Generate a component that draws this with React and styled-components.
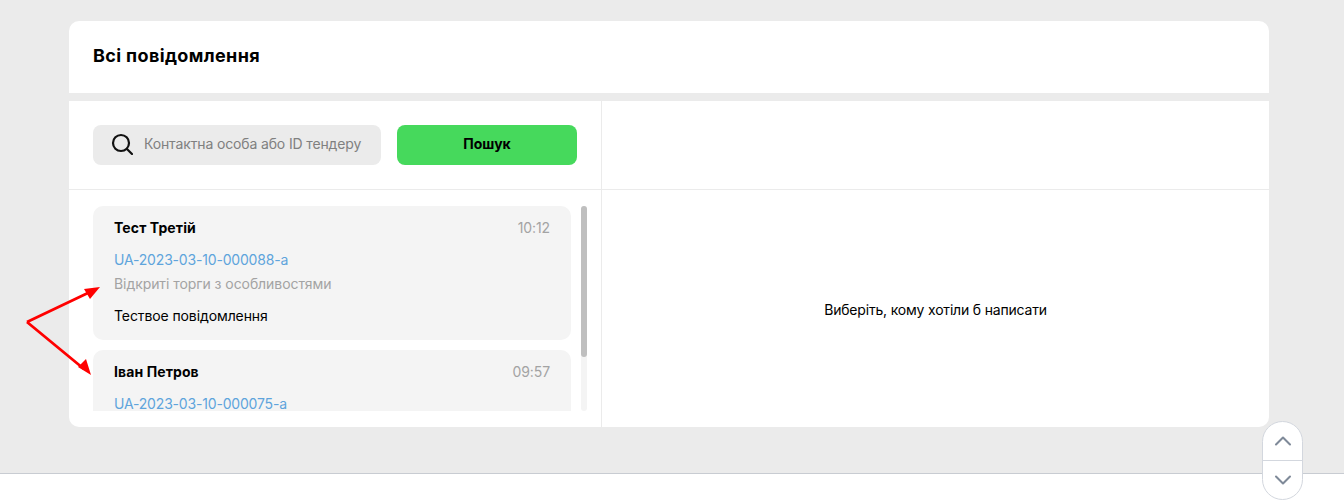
import React from "react";
import styled, { createGlobalStyle } from "styled-components";
import { ChevronUp, ChevronDown } from "lucide-react";

const GlobalStyle = createGlobalStyle`
  html, body {
    margin: 0;
    padding: 0;
    background: #fff;
    font-family: Inter, "Liberation Sans", sans-serif;
    color: #000;
  }
  * {
    box-sizing: border-box;
  }
`;

const Page = styled.div`
  position: relative;
  height: 500px;
  overflow: hidden;
`;

const Main = styled.main`
  height: 474px;
  padding: 21px 75px 0 69px;
  background: #ebebeb;
  border-bottom: 1px solid #c8ccd2;
`;

const Card = styled.section`
  display: flex;
  flex-direction: column;
  gap: 8px;
  height: 406px;
`;

const Header = styled.header`
  display: flex;
  align-items: center;
  height: 72px;
  padding: 0 24px 2px;
  background: #fff;
  border-radius: 10px 10px 0 0;
`;

const Title = styled.h1`
  margin: 0;
  font-size: 18px;
  font-weight: 700;
  line-height: 24px;
  letter-spacing: 0.37px;
`;

const Body = styled.div`
  flex: 1;
  display: flex;
  background: #fff;
  border-radius: 0 0 10px 10px;
  min-height: 0;
`;

const Sidebar = styled.div`
  display: flex;
  flex-direction: column;
  width: 533px;
  border-right: 1px solid #ebebeb;
`;

const SearchRow = styled.div`
  display: flex;
  gap: 16px;
  height: 89px;
  padding: 24px 24px 0;
  border-bottom: 1px solid #ebebeb;
`;

const SearchBox = styled.div`
  display: flex;
  align-items: center;
  gap: 11px;
  width: 288px;
  height: 40px;
  padding: 0 0 2px 18px;
  background: #ebebeb;
  border-radius: 8px;
`;

const SearchText = styled.span`
  margin-bottom: 2px;
  font-size: 14px;
  color: #808080;
  white-space: nowrap;
  letter-spacing: -0.14px;
`;

const SearchButton = styled.button`
  width: 180px;
  height: 40px;
  padding: 0 0 3px;
  border: 0;
  border-radius: 8px;
  background: #46d95c;
  font-family: inherit;
  font-size: 14px;
  font-weight: 700;
  color: #000;
`;

const ListWrap = styled.div`
  display: flex;
  gap: 10px;
  height: 205px;
  margin: 16px 14px 0 24px;
`;

const List = styled.div`
  flex: 1;
  display: flex;
  flex-direction: column;
  gap: 10px;
  overflow: hidden;
`;

const Dialog = styled.article`
  flex-shrink: 0;
  height: 134px;
  padding: 11px 21px 0;
  background: #f4f4f4;
  border-radius: 10px;
`;

const DialogTop = styled.div`
  display: flex;
  justify-content: space-between;
  align-items: center;
  height: 20px;
`;

const Name = styled.span`
  font-size: 14px;
  font-weight: 700;
  letter-spacing: 0.1px;
`;

const Time = styled.span`
  font-size: 14px;
  color: #a3a3a3;
  letter-spacing: -0.1px;
`;

const TenderId = styled.div`
  margin-top: 13px;
  font-size: 14px;
  line-height: 20px;
  color: #5ea4dc;
  letter-spacing: -0.18px;
`;

const Kind = styled.div`
  margin-top: 4px;
  font-size: 14px;
  line-height: 20px;
  color: #a3a3a3;
  letter-spacing: -0.07px;
`;

const Message = styled.div`
  margin-top: 12px;
  font-size: 14px;
  line-height: 20px;
  letter-spacing: -0.1px;
`;

const Track = styled.div`
  width: 6px;
  background: #f4f4f4;
  border-radius: 3px;
`;

const Thumb = styled.div`
  height: 151px;
  background: #bfbfbf;
  border-radius: 3px;
`;

const Chat = styled.div`
  flex: 1;
  display: flex;
  flex-direction: column;
`;

const ChatTop = styled.div`
  height: 89px;
  border-bottom: 1px solid #ebebeb;
`;

const ChatEmpty = styled.div`
  flex: 1;
  display: flex;
  align-items: center;
  justify-content: center;
  padding-top: 2px;
  font-size: 14px;
  letter-spacing: -0.19px;
`;

const ScrollControl = styled.div`
  position: absolute;
  left: 1262px;
  top: 421px;
  display: flex;
  flex-direction: column;
  width: 41px;
  height: 79px;
  background: #fff;
  border: 1.5px solid #d3d7de;
  border-radius: 21px;
`;

const ScrollButton = styled.button`
  flex: 1;
  display: flex;
  align-items: center;
  justify-content: center;
  padding: 0;
  background: none;
  border: 0;
  color: #7f8a99;

  & + & {
    border-top: 1.5px solid #d3d7de;
  }
`;

const Arrows = styled.svg`
  position: absolute;
  left: 0;
  top: 0;
  pointer-events: none;
`;

export default function App() {
  return (
    <Page>
      <GlobalStyle />
      <Main>
        <Card>
          <Header>
            <Title>Всі повідомлення</Title>
          </Header>
          <Body>
            <Sidebar>
              <SearchRow>
                <SearchBox>
                  <svg width="22" height="22" viewBox="0 0 22 22" fill="none" stroke="#111" strokeWidth="2.2">
                    <circle cx="10" cy="10" r="8" />
                    <path d="M16 16l5 5" strokeLinecap="round" />
                  </svg>
                  <SearchText>Контактна особа або ID тендеру</SearchText>
                </SearchBox>
                <SearchButton>Пошук</SearchButton>
              </SearchRow>
              <ListWrap>
                <List>
                  <Dialog>
                    <DialogTop>
                      <Name>Тест Третій</Name>
                      <Time>10:12</Time>
                    </DialogTop>
                    <TenderId>UA-2023-03-10-000088-a</TenderId>
                    <Kind>Відкриті торги з особливостями</Kind>
                    <Message>Тествое повідомлення</Message>
                  </Dialog>
                  <Dialog>
                    <DialogTop>
                      <Name>Іван Петров</Name>
                      <Time>09:57</Time>
                    </DialogTop>
                    <TenderId>UA-2023-03-10-000075-a</TenderId>
                  </Dialog>
                </List>
                <Track>
                  <Thumb />
                </Track>
              </ListWrap>
            </Sidebar>
            <Chat>
              <ChatTop />
              <ChatEmpty>Виберіть, кому хотіли б написати</ChatEmpty>
            </Chat>
          </Body>
        </Card>
      </Main>
      <ScrollControl>
        <ScrollButton>
          <ChevronUp size={28} strokeWidth={1.75} />
        </ScrollButton>
        <ScrollButton>
          <ChevronDown size={28} strokeWidth={1.75} />
        </ScrollButton>
      </ScrollControl>
      <Arrows width="120" height="400">
        <path d="M27 322L90 292M27 322L84 369" stroke="#f00" strokeWidth="2.8" fill="none" />
        <path d="M100 287L84 289L90 299Z" fill="#f00" />
        <path d="M91 375L78 367L86 359Z" fill="#f00" />
      </Arrows>
    </Page>
  );
}
